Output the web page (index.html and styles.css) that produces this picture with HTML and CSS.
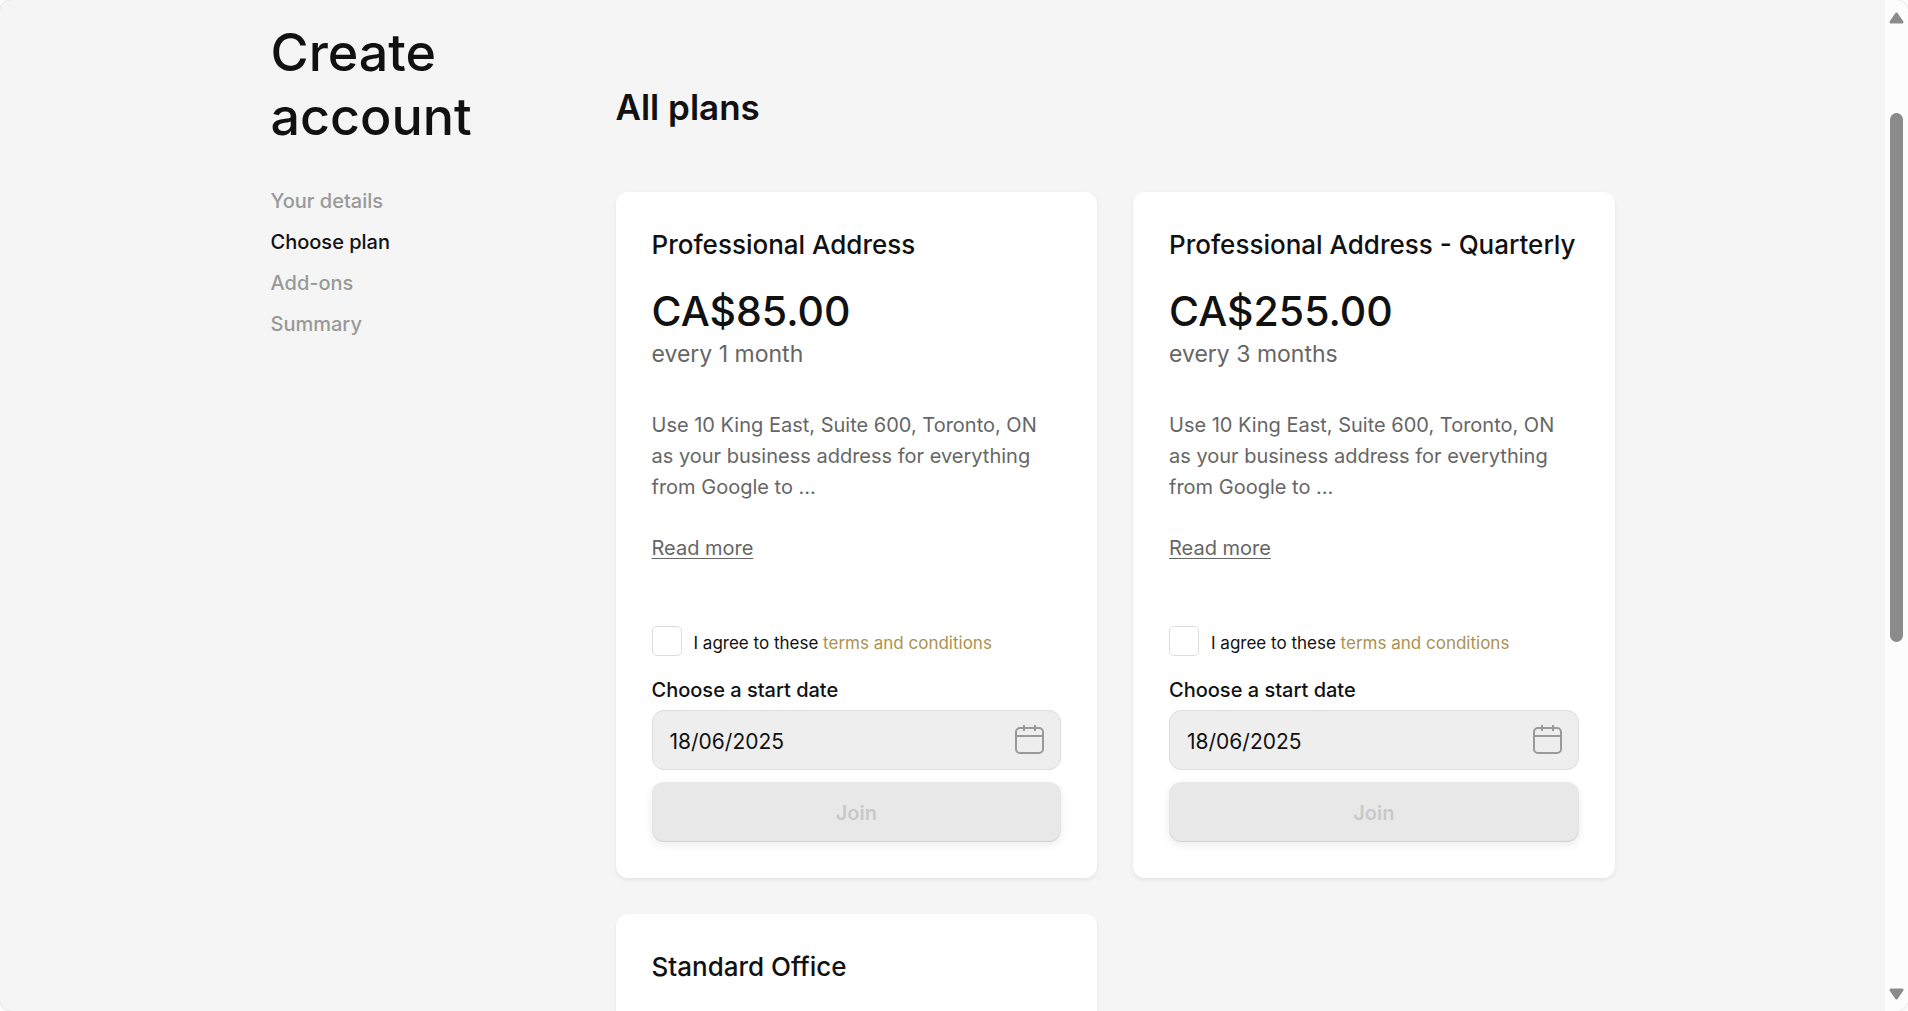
FILE: index.html
```html
<!DOCTYPE html>
<html lang="en">
<head>
    <meta charset="UTF-8">
    <meta name="viewport" content="width=device-width, initial-scale=1.0">
    <title>Create account</title>
    <link rel="stylesheet" href="styles.css">
</head>
<body>

    <div class="window">
        <div class="page">
            <div class="container">
                <aside class="sidebar">
                    <h1>Create account</h1>
                    <nav class="steps">
                        <a href="#details">Your details</a>
                        <a href="#plan" class="active">Choose plan</a>
                        <a href="#addons">Add-ons</a>
                        <a href="#summary">Summary</a>
                    </nav>
                </aside>

                <main class="content">
                    <h2>All plans</h2>

                    <div class="plans">
                        <form class="card">
                            <h3>Professional Address</h3>
                            <p class="price">CA$85.00</p>
                            <p class="period">every 1 month</p>
                            <p class="description">Use 10 King East, Suite 600, Toronto, ON as your business address for everything from Google to …</p>
                            <a href="#more" class="read-more">Read more</a>

                            <div class="terms">
                                <input type="checkbox" id="terms1">
                                <label for="terms1">I agree to these <a href="#terms">terms and conditions</a></label>
                            </div>

                            <label class="date-label" for="date1">Choose a start date</label>
                            <div class="date-field">
                                <input type="text" id="date1" value="18/06/2025" autocomplete="off">
                                <svg viewBox="0 0 30 30" aria-hidden="true">
                                    <rect x="1" y="3" width="27" height="25" rx="4"/>
                                    <path d="M1 11h27M9 0v6M20 0v6"/>
                                </svg>
                            </div>
                            <button type="submit" disabled>Join</button>
                        </form>

                        <form class="card">
                            <h3>Professional Address - Quarterly</h3>
                            <p class="price">CA$255.00</p>
                            <p class="period">every 3 months</p>
                            <p class="description">Use 10 King East, Suite 600, Toronto, ON as your business address for everything from Google to …</p>
                            <a href="#more" class="read-more">Read more</a>

                            <div class="terms">
                                <input type="checkbox" id="terms2">
                                <label for="terms2">I agree to these <a href="#terms">terms and conditions</a></label>
                            </div>

                            <label class="date-label" for="date2">Choose a start date</label>
                            <div class="date-field">
                                <input type="text" id="date2" value="18/06/2025" autocomplete="off">
                                <svg viewBox="0 0 30 30" aria-hidden="true">
                                    <rect x="1" y="3" width="27" height="25" rx="4"/>
                                    <path d="M1 11h27M9 0v6M20 0v6"/>
                                </svg>
                            </div>
                            <button type="submit" disabled>Join</button>
                        </form>

                        <form class="card">
                            <h3>Standard Office</h3>
                        </form>
                    </div>
                </main>
            </div>
        </div>

        <div class="scrollbar" aria-hidden="true">
            <svg class="arrow" viewBox="0 0 15 12"><path d="M7.5 2L13 10H2z"/></svg>
            <div class="track">
                <div class="thumb"></div>
            </div>
            <svg class="arrow" viewBox="0 0 15 12"><path d="M7.5 10L13 2H2z"/></svg>
        </div>
    </div>

</body>
</html>
```

FILE: styles.css
```css
* {
    box-sizing: border-box;
}
body {
    margin: 0;
    background-color: #fdfdfd;
    color: #111;
    font-family: Inter, "Liberation Sans", sans-serif;
    font-size: 20px;
}
h1, h2, h3, p {
    margin: 0;
    font-weight: 500;
}
.window {
    display: flex;
    height: 100vh;
    overflow: hidden;
    border-radius: 12px;
    background-color: #f5f5f5;
    box-shadow: 0 0 2px rgba(0, 0, 0, 0.25);
}
.page {
    flex: 1;
    overflow: hidden;
}
.container {
    display: grid;
    grid-template-columns: repeat(12, 1fr);
    column-gap: 36px;
    max-width: 1344px;
    margin: 0 auto;
}

/* Sidebar */
.sidebar {
    grid-column: span 3;
    padding-top: 21px;
}
h1 {
    max-width: 240px;
    font-size: 52px;
    line-height: 64px;
}
.steps {
    display: flex;
    flex-direction: column;
    gap: 11px;
    margin-top: 37px;
    line-height: 30px;
}
.steps a {
    color: #999;
    font-weight: 500;
    text-decoration: none;
}
.steps .active {
    color: #111;
}

/* Plans */
.content {
    grid-column: span 9;
    padding-top: 85px;
}
h2 {
    margin-bottom: 63px;
    font-size: 35px;
    font-weight: 600;
    line-height: 44px;
}
.plans {
    display: grid;
    grid-template-columns: 1fr 1fr;
    gap: 36px;
}
.card {
    display: flex;
    flex-direction: column;
    min-height: 686px;
    padding: 36px;
    border-radius: 12px;
    background-color: #fff;
    box-shadow: 0 2px 4px rgba(0, 0, 0, 0.07);
}
h3 {
    font-size: 26px;
    line-height: 34px;
}
.price {
    margin-top: 24px;
    font-size: 41px;
    line-height: 50px;
}
.period {
    margin-top: 2px;
    color: #666;
    font-size: 23px;
    font-weight: 400;
    line-height: 32px;
}
.description {
    margin-top: 40px;
    color: #666;
    font-weight: 400;
    line-height: 31px;
}
.read-more {
    align-self: flex-start;
    margin-top: 30px;
    color: #666;
    line-height: 31px;
    text-decoration-thickness: 1px;
    text-underline-offset: 3px;
}
.terms {
    display: flex;
    align-items: flex-end;
    gap: 12px;
    margin-top: 62px;
    font-size: 17px;
    line-height: 26px;
}
.terms input {
    width: 30px;
    height: 30px;
    margin: 0;
    appearance: none;
    border: 1px solid #ddd;
    border-radius: 5px;
    background-color: #fff;
}
.terms a {
    color: #ad9150;
    text-decoration: none;
}
.date-label {
    margin-top: 20px;
    font-weight: 500;
    line-height: 28px;
}
.date-field {
    position: relative;
    margin-top: 6px;
}
.date-field input {
    display: block;
    width: 100%;
    height: 60px;
    padding: 2px 60px 0 17px;
    border: 1px solid #ddd;
    border-radius: 12px;
    background-color: #eee;
    color: #111;
    font: inherit;
    font-size: 21px;
}
.date-field svg {
    position: absolute;
    top: 15px;
    right: 16px;
    width: 30px;
    height: 30px;
    fill: none;
    stroke: #999;
    stroke-width: 2;
}
button {
    height: 60px;
    margin-top: 12px;
    padding-top: 3px;
    border: none;
    border-radius: 12px;
    background-color: #e8e8e8;
    box-shadow: inset 0 -1px 1px rgba(0, 0, 0, 0.1), 0 3px 8px rgba(0, 0, 0, 0.08);
    color: #c8c8c8;
    font: inherit;
    font-weight: 600;
}

/* Scrollbar */
.scrollbar {
    display: flex;
    flex-direction: column;
    align-items: center;
    width: 23px;
    padding: 12px 0 11px;
    background-color: #fcfcfc;
}
.arrow {
    width: 15px;
    height: 12px;
    fill: #8b8b8b;
    stroke: #8b8b8b;
    stroke-width: 3;
    stroke-linejoin: round;
}
.track {
    flex: 1;
    padding: 89px 0 7px;
}
.thumb {
    width: 13px;
    height: 61%;
    border-radius: 7px;
    background-color: #8b8b8b;
}
```
